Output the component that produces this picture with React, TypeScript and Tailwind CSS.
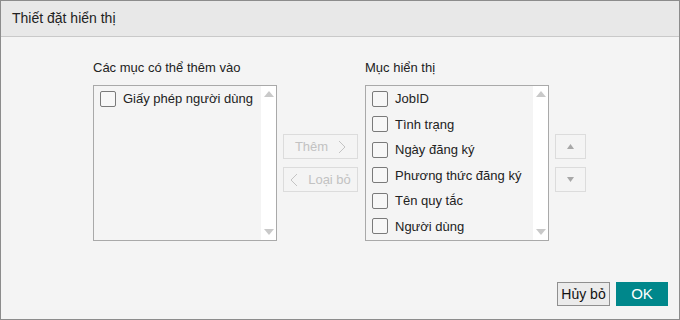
import React from "react";

const leftItems = ["Giấy phép người dùng"];
const rightItems = [
  "JobID",
  "Tình trạng",
  "Ngày đăng ký",
  "Phương thức đăng ký",
  "Tên quy tắc",
  "Người dùng",
];

const Checkbox = () => (
  <span className="w-[16px] h-[16px] shrink-0 rounded-[2px] border border-[#7a7a7a] bg-[#f7f7f7]" />
);

const ListBox = ({ items }: { items: string[] }) => (
  <div className="flex w-[184px] h-[156px] border border-[#a9a9a9] bg-[#f4f4f4]">
    <div className="flex-1 pl-[6px]">
      {items.map((item) => (
        <div key={item} className="flex items-center gap-[7px] h-[25.5px]">
          <Checkbox />
          <span className="text-[13px] text-[#222]">{item}</span>
        </div>
      ))}
    </div>
    <div className="w-[15px] bg-white flex flex-col items-center justify-between py-[5px]">
      <svg width="10" height="6" viewBox="0 0 10 6">
        <polygon points="5,0 10,6 0,6" fill="#c9c9c9" />
      </svg>
      <svg width="10" height="6" viewBox="0 0 10 6">
        <polygon points="0,0 10,0 5,6" fill="#c9c9c9" />
      </svg>
    </div>
  </div>
);

const Chevron = ({ dir }: { dir: "left" | "right" }) => (
  <svg width="8" height="14" viewBox="0 0 8 14" fill="none">
    <polyline
      points={dir === "right" ? "1,1 7,7 1,13" : "7,1 1,7 7,13"}
      stroke="#c4c4c4"
      strokeWidth="1"
    />
  </svg>
);

export default function App() {
  return (
    <div
      className="w-[680px] h-[320px] flex flex-col border border-[#8c8c8c] bg-[#f4f4f4]"
      style={{ fontFamily: '"Liberation Sans", Arial, sans-serif' }}
    >
      <div className="h-[36px] shrink-0 flex items-center px-[11px] bg-[#e8e8e8] border-b border-[#c9c9c9]">
        <span className="text-[14px] text-[#222]">Thiết đặt hiển thị</span>
      </div>

      <div className="flex-1 flex flex-col">
        <div className="flex items-start pl-[92px] pt-[23px]">
          <div className="flex flex-col">
            <span className="text-[13px] text-[#222] h-[16px] leading-[16px] mb-[9px]">
              Các mục có thể thêm vào
            </span>
            <ListBox items={leftItems} />
          </div>

          <div className="flex flex-col gap-[8px] mt-[74px] ml-[6px]">
            <button className="w-[75px] h-[25px] flex items-center justify-center gap-[10px] border border-[#dcdcdc] text-[13px] text-[#c2c2c2]">
              Thêm
              <Chevron dir="right" />
            </button>
            <button className="w-[75px] h-[25px] flex items-center justify-center gap-[10px] border border-[#dcdcdc] text-[13px] text-[#c2c2c2]">
              <Chevron dir="left" />
              Loại bỏ
            </button>
          </div>

          <div className="flex flex-col ml-[7px]">
            <span className="text-[13px] text-[#222] h-[16px] leading-[16px] mb-[9px]">
              Mục hiển thị
            </span>
            <ListBox items={rightItems} />
          </div>

          <div className="flex flex-col gap-[8px] mt-[74px] ml-[6px]">
            <button className="w-[31px] h-[25px] flex items-center justify-center border border-[#dcdcdc]">
              <svg width="7" height="5" viewBox="0 0 7 5">
                <polygon points="3.5,0 7,5 0,5" fill="#a8a8a8" />
              </svg>
            </button>
            <button className="w-[31px] h-[25px] flex items-center justify-center border border-[#dcdcdc]">
              <svg width="7" height="5" viewBox="0 0 7 5">
                <polygon points="0,0 7,0 3.5,5" fill="#a8a8a8" />
              </svg>
            </button>
          </div>
        </div>

        <div className="mt-auto flex justify-end gap-[6px] pr-[11px] pb-[13px]">
          <button className="w-[53px] h-[24px] border border-[#8f8f8f] bg-[#ebebeb] text-[14px] text-[#111]">
            Hủy bỏ
          </button>
          <button className="w-[52px] h-[24px] bg-[#00878b] text-[15px] text-white">
            OK
          </button>
        </div>
      </div>
    </div>
  );
}
